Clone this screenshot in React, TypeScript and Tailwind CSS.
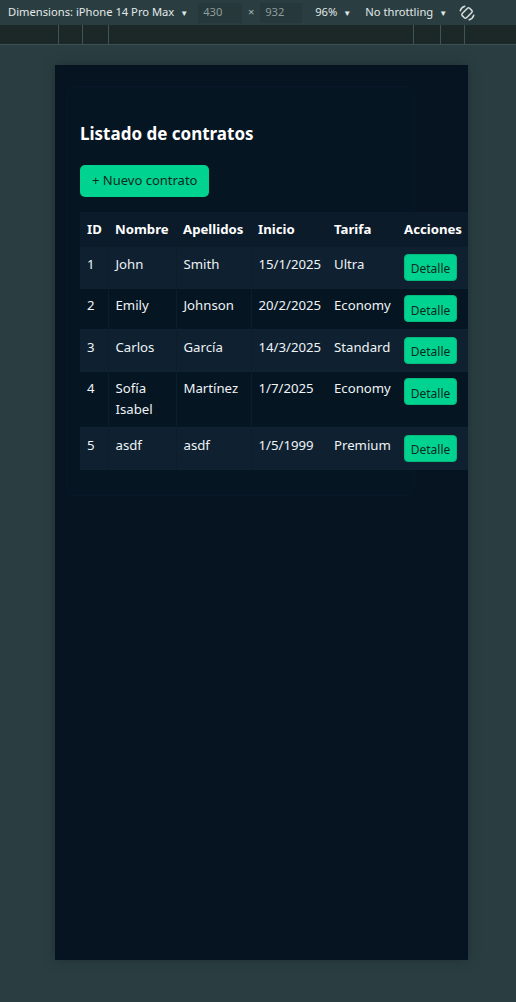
import React from 'react';

const contracts = [
  { id: 1, nombre: 'John', apellidos: 'Smith', inicio: '15/1/2025', tarifa: 'Ultra' },
  { id: 2, nombre: 'Emily', apellidos: 'Johnson', inicio: '20/2/2025', tarifa: 'Economy' },
  { id: 3, nombre: 'Carlos', apellidos: 'García', inicio: '14/3/2025', tarifa: 'Standard' },
  { id: 4, nombre: 'Sofía Isabel', apellidos: 'Martínez', inicio: '1/7/2025', tarifa: 'Economy' },
  { id: 5, nombre: 'asdf', apellidos: 'asdf', inicio: '1/5/1999', tarifa: 'Premium' },
];

function RotateIcon() {
  return (
    <svg width="18" height="18" viewBox="0 0 24 24" fill="none" stroke="#d7dede" strokeWidth="2" strokeLinecap="round">
      <rect x="8" y="5" width="8" height="14" rx="2" transform="rotate(45 12 12)" />
      <path d="M3 9a9 9 0 0 1 6-6" />
      <path d="M21 15a9 9 0 0 1-6 6" />
    </svg>
  );
}

export default function App() {
  return (
    <div className="w-[516px] h-[1002px] overflow-hidden bg-[#2a3e41] font-['Noto_Sans','Open_Sans',sans-serif]">
      {/* devtools toolbar */}
      <div className="h-[25px] flex items-center text-[11.2px] text-[#e3e8e8] whitespace-nowrap">
        <span className="ml-[8px]">Dimensions: iPhone 14 Pro Max</span>
        <span className="ml-[6px] text-[8px]">▼</span>
        <span className="ml-[10px] w-[44px] h-[20px] flex items-center pl-[5px] bg-[#26383a] text-[#8f9d9e]">430</span>
        <span className="ml-[3px] w-[12px] text-center text-[#a9b6b6]">×</span>
        <span className="ml-[3px] w-[42px] h-[20px] flex items-center pl-[5px] bg-[#26383a] text-[#8f9d9e]">932</span>
        <span className="ml-[13px]">96%</span>
        <span className="ml-[6px] text-[8px]">▼</span>
        <span className="ml-[14px]">No throttling</span>
        <span className="ml-[6px] text-[8px]">▼</span>
        <span className="ml-[11px] flex items-center"><RotateIcon /></span>
      </div>
      {/* ruler */}
      <div className="h-[20px] flex bg-[#1c2828] border-b border-[#3a5052]">
        <div className="w-[58px]" />
        <div className="w-[24px] border-l border-[#3d5557]" />
        <div className="w-[26px] border-l border-[#3d5557]" />
        <div className="w-[305px] border-l border-[#3d5557]" />
        <div className="w-[27px] border-l border-[#3d5557]" />
        <div className="w-[24px] border-l border-[#3d5557]" />
        <div className="flex-1 border-l border-[#3d5557]" />
      </div>

      <div className="pt-[20px] pl-[55px]">
        <div className="w-[413px] h-[895px] overflow-hidden bg-[#051420] shadow-[0_0_12px_rgba(0,0,0,0.25)] pt-[21px] pl-[11px]">
          <div className="w-[349px] h-[410px] rounded-lg border border-[#08182a] bg-[#061522] pl-[13px] pt-[29px]">
            <h2 className="text-[17px] font-bold text-white leading-[36px]">Listado de contratos</h2>
            <button className="mt-[13px] h-[32px] px-[12px] rounded-[5px] bg-[#00d38f] text-[#0a2a22] text-[13px]">
              + Nuevo contrato
            </button>
            <table className="mt-[15px] border-collapse text-[13.2px] text-[#eef3f6] whitespace-nowrap table-fixed w-[390px]">
              <colgroup>
                <col className="w-[28px]" />
                <col className="w-[68px]" />
                <col className="w-[75px]" />
                <col className="w-[76px]" />
                <col className="w-[70px]" />
                <col className="w-[73px]" />
              </colgroup>
              <thead>
                <tr className="bg-[#0b1b29] text-left text-white">
                  <th className="px-[7px] h-[35px] font-bold">ID</th>
                  <th className="px-[7px] font-bold">Nombre</th>
                  <th className="px-[7px] font-bold">Apellidos</th>
                  <th className="px-[7px] font-bold">Inicio</th>
                  <th className="px-[7px] font-bold">Tarifa</th>
                  <th className="px-[7px] font-bold">Acciones</th>
                </tr>
              </thead>
              <tbody>
                {contracts.map((c, i) => (
                  <tr
                    key={c.id}
                    className={`border-b border-[#102232] align-top ${i % 2 === 0 ? 'bg-[#0f2131]' : 'bg-[#061522]'}`}
                  >
                    <td className="px-[7px] py-[6.75px] leading-[21px] border-r border-[#0c1d2c]">{c.id}</td>
                    <td className="px-[7px] py-[6.75px] leading-[21px] whitespace-normal border-r border-[#0c1d2c]">{c.nombre}</td>
                    <td className="px-[7px] py-[6.75px] leading-[21px] border-r border-[#0c1d2c]">{c.apellidos}</td>
                    <td className="px-[7px] py-[6.75px] leading-[21px]">{c.inicio}</td>
                    <td className="px-[7px] py-[6.75px] leading-[21px]">{c.tarifa}</td>
                    <td className="px-[7px] py-[6.75px] leading-[21px]">
                      <button className="h-[27px] w-[53px] rounded-[4px] border border-[#05b97c] bg-[#00d38f] text-[#0b2a22] text-[12px] pt-[3px]">
                        Detalle
                      </button>
                    </td>
                  </tr>
                ))}
              </tbody>
            </table>
          </div>
        </div>
      </div>
    </div>
  );
}
